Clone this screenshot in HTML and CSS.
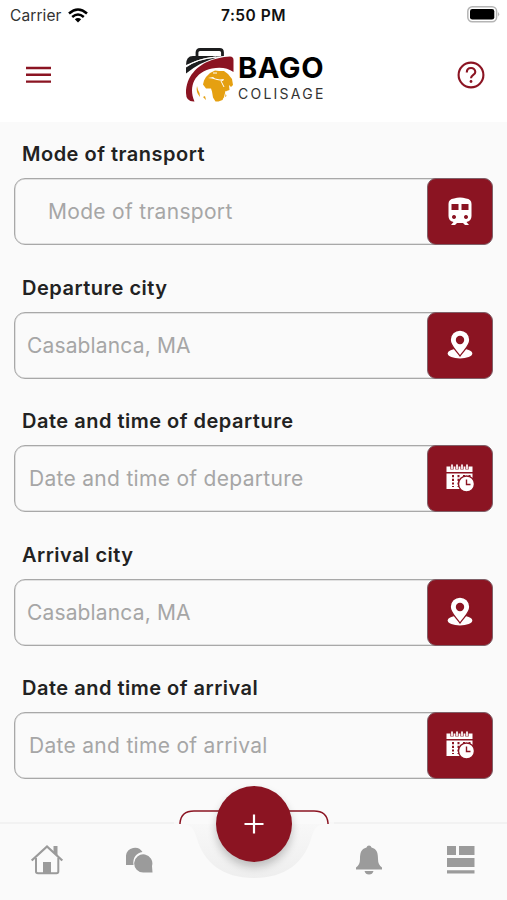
FILE: index.html
```html
<!DOCTYPE html>
<html lang="en">
<head>
<meta charset="utf-8">
<title>Bago Colisage</title>
<link rel="stylesheet" href="styles.css">
</head>
<body>
<svg class="defs" width="0" height="0" aria-hidden="true">
  <symbol id="train" viewBox="0 0 28 32">
    <path fill="#fff" fill-rule="evenodd" d="M8 2.500Q14 .5 20 2.500Q25.500 3 25.500 8v12q0 5-5 6l2.500 3h-4l-2-2h-6l-2 2H5l2.500-3q-5-1-5-6V8q0-5 5.500-5.500zM5.500 8v6h7V8zm10 0v6h7V8zM8 19a2 2 0 1 0 .01 0zm12 0a2 2 0 1 0 .01 0z"/>
  </symbol>
  <symbol id="pin" viewBox="0 0 28 32">
    <ellipse cx="14" cy="24.500" rx="12.300" ry="4.900" fill="#fff"/>
    <path fill="#fff" stroke="#8b1422" stroke-width="1.300" d="M14 1a9.800 9.800 0 0 0-9.800 9.800C4.200 17 10 21 14 27c4-6 9.800-10 9.800-16.200A9.800 9.800 0 0 0 14 1z"/>
    <circle cx="14" cy="11" r="4.200" fill="#8b1422"/>
  </symbol>
  <symbol id="calendar" viewBox="0 0 28 32">
    <path fill="#fff" d="M.5 3.500h26v5.500H.5zM.5 10.500h26v15.500H.5z"/>
    <path stroke="#8b1422" stroke-width="3.200" d="M6 1v5.500M11 1v5.500M16 1v5.500M21 1v5.500"/>
    <path stroke="#fff" stroke-width="1.700" stroke-linecap="round" d="M6 2v3.500M11 2v3.500M16 2v3.500M21 2v3.500"/>
    <path stroke="#8b1422" stroke-width="2" stroke-dasharray="2.200 1.500" d="M7 12v12M12.500 12v12M18 12v4M23.500 12v3"/>
    <circle cx="20.500" cy="21" r="8" fill="#fff" stroke="#8b1422" stroke-width="1.400"/>
    <path d="M20.500 16.500v5h4" fill="none" stroke="#8b1422" stroke-width="1.400"/>
  </symbol>
</svg>
<div class="app">
  <div class="status">
    <div class="carrier"><span>Carrier</span>
      <svg width="20" height="15" viewBox="0 0 20 15" fill="none" stroke="#000" stroke-width="2.500"><path d="M1 5.500Q10-2.500 19 5.500M4.200 9Q10 4 15.800 9"/><path d="M6.800 11.300Q10 8.800 13.200 11.300L10 14.500z" fill="#000" stroke="none"/></svg>
    </div>
    <div class="time">7:50 PM</div>
    <svg class="battery" width="33" height="17" viewBox="0 0 33 17"><rect x=".8" y=".8" width="28.800" height="15" rx="4.500" fill="#fff" stroke="#b5b5b5" stroke-width="1.500"/><rect x="3" y="3" width="24.300" height="10.500" rx="2.300"/><path d="M31.200 6q2 2.300 0 4.500z" fill="#aaa"/></svg>
  </div>
  <header class="header">
    <svg width="25" height="18" viewBox="0 0 25 18" stroke="#8b1422" stroke-width="2.400"><path d="M0 2h25M0 8.800h25M0 15.600h25"/></svg>
    <div class="brand">
      <svg width="50" height="56" viewBox="0 0 50 56">
        <path d="M11 9.500V5.500Q11 2.500 14 2.500H33.500Q36.500 2.500 36.500 5.500V9" fill="none" stroke="#1c1d1e" stroke-width="2.800"/>
        <path d="M0 18Q0 9 7 9H38Q17 9.500 0 18z" fill="#1c1d1e"/>
        <path d="M0 20.500Q12 12 31 10.500Q14 15 0 26.500z" fill="#1c1d1e"/>
        <path d="M0 19.500Q12 11.500 30 10" fill="none" stroke="#fff" stroke-width="1"/>
        <path d="M8.500 54.500Q0 55 0 46C0 29 12 19 21 15Q32 10 44 9.500Q47.500 9.500 47.500 13V25Q39 19 26 21.500C9 25 2 39 8.500 54.500z" fill="#8b1422"/>
        <path d="M20 30l4-4 5-2.500 4 .5 5 0 4 3 4 5 1 6-2 2-2-2 .5 5-3 1-1 2 1 3-3 2-1 2-4 1.500h-3l-2.500-4-1-6-1-3-5 0-3-4 1-4z" fill="#e5a011"/>
        <path d="M22 31l5-1 2 1.500 5 1 4-.5-1 2-6-1-5-1.500z" fill="#fff"/>
        <path d="M35 34l3 6M40 44l-2 8M27 26l4 0" stroke="#fff" stroke-width="1"/>
        <path d="M11 39q-1.500 6 3 11l-.5-4-1.500-3zM17 50l3 3-1-4z" fill="#e5a011"/>
      </svg>
      <div class="wordmark"><div class="bago">BAGO</div><div class="colisage">COLISAGE</div></div>
    </div>
    <svg width="28" height="28" viewBox="0 0 28 28" fill="none" stroke="#8b1422" stroke-width="2.100"><circle cx="14" cy="14" r="12.400"/><path d="M9.800 11.500C9.800 5.500 18.300 5.800 18.300 11C18.300 14 14 13.800 14 17.300"/><circle cx="14" cy="20.500" r="1.400" fill="#8b1422" stroke="none"/></svg>
  </header>
  <main class="form">
    <section class="group"><div class="label">Mode of transport</div><div class="field"><span class="hint mode">Mode of transport</span><div class="tile"><svg width="28" height="32"><use href="#train"/></svg></div></div></section>
    <section class="group"><div class="label">Departure city</div><div class="field"><span class="hint city">Casablanca, MA</span><div class="tile"><svg width="28" height="32"><use href="#pin"/></svg></div></div></section>
    <section class="group"><div class="label">Date and time of departure</div><div class="field"><span class="hint">Date and time of departure</span><div class="tile"><svg width="28" height="32"><use href="#calendar"/></svg></div></div></section>
    <section class="group"><div class="label">Arrival city</div><div class="field"><span class="hint city">Casablanca, MA</span><div class="tile"><svg width="28" height="32"><use href="#pin"/></svg></div></div></section>
    <section class="group"><div class="label">Date and time of arrival</div><div class="field"><span class="hint">Date and time of arrival</span><div class="tile"><svg width="28" height="32"><use href="#calendar"/></svg></div></div></section>
  </main>
  <nav class="nav">
    <svg class="notch" width="160" height="75" viewBox="0 0 160 75"><defs><linearGradient id="shade" x2="0" y2="1"><stop stop-color="#f8f8f8"/><stop offset="1" stop-color="#eeeeee"/></linearGradient></defs><path d="M0 17H160V19H154C142 19 140 24 137 34C130 57 112 73 80 73S30 57 23 34C20 24 18 19 6 19H0z" fill="url(#shade)"/><path d="M6 19V18Q7 6 20 6H140Q153 6 154 18V19" fill="#fafafa" stroke="#8b1422" stroke-width="1.500"/></svg>
    <svg width="34" height="32" viewBox="0 0 34 32" fill="none" stroke="#9b9b9b" stroke-width="2"><path d="M1.700 16.500L17 2.500 32.300 16.500" stroke-width="2.300"/><path d="M6 14V27.500Q6 29.300 8 29.300H26.500Q28.300 29.300 28.300 27.500V14"/><path d="M23.500 2h4v9.500l-4-3.500z" fill="#9b9b9b" stroke="none"/><path d="M13 18h8v11h-8z" fill="#9b9b9b" stroke="none"/></svg>
    <svg class="chat" width="28" height="28" viewBox="0 0 28 28" fill="#9b9b9b"><path d="M1 19V9.500A9 9 0 0 1 17.500 6C11 7 7.500 12 8.500 19z"/><path d="M27.500 26.500H18.500A9.100 9.100 0 1 1 27 20z"/></svg>
    <button class="fab" aria-label="Add"><svg width="20" height="20" viewBox="0 0 20 20"><path d="M10 .5v19M.5 10h19" stroke="#fff" stroke-width="2.200"/></svg></button>
    <svg class="bell" width="28" height="32" viewBox="0 0 28 32" fill="#9b9b9b"><path d="M14 1.500Q16 1.500 16.500 3.500C22 5 23 9 23 15Q23 21 27 23.500V25.500H1V23.500Q5 21 5 15C5 9 6 5 11.500 3.500Q12 1.500 14 1.500zM9.500 27h9Q17.500 30.500 14 30.500T9.500 27z"/></svg>
    <svg width="28" height="28" viewBox="0 0 28 28" fill="#9b9b9b"><path d="M0 0h9v9H0zM12 0h15.500v9H12zM0 12h27.500v9H0zM0 24.200h27.500v3.200H0z"/></svg>
  </nav>
</div>
</body>
</html>
```
FILE: styles.css
```css
* { box-sizing: border-box; }
body { margin: 0; font-family: Inter, "Liberation Sans", sans-serif; background: #fafafa; }
.defs { position: absolute; }
svg { display: block; flex: none; }
.app { width: 507px; height: 900px; display: flex; flex-direction: column; overflow: hidden; }
.status { height: 30px; flex: none; background: #fff; display: grid; grid-template-columns: 1fr auto 1fr; align-items: center; padding: 0 7px 2px 10px; color: #111; font-size: 15.500px; }
.carrier { display: flex; align-items: center; gap: 6px; padding-top: 2px; color: #333; letter-spacing: .1px; }
.time { font-weight: 600; padding-top: 2px; letter-spacing: .5px; margin-left: -3px; }
.battery { justify-self: end; }
.header { height: 92px; flex: none; background: #fff; display: flex; align-items: center; justify-content: space-between; padding: 0 22px 2px 26px; }
.brand { display: flex; align-items: flex-start; gap: 2px; margin-left: 3px; }
.wordmark { width: 87px; padding-top: 4px; white-space: nowrap; }
.bago { font-size: 29px; font-weight: 700; line-height: 34px; letter-spacing: .6px; color: #000; }
.colisage { font-size: 14px; letter-spacing: 2.250px; line-height: 18px; color: #333; }
.form { flex: 1; min-height: 0; padding: 0 14px; }
.group { height: 133.500px; padding-top: 20px; }
.label { height: 36px; line-height: 25px; padding-left: 8px; font-size: 20px; font-weight: 600; letter-spacing: .5px; color: #222; white-space: nowrap; }
.field { height: 67px; border: 1px solid #a8a8a8; box-shadow: inset 0 0 0 .5px #c8c8c8; border-radius: 11px; display: flex; align-items: center; justify-content: space-between; }
.hint { font-size: 21px; letter-spacing: .3px; color: #a6a6a6; white-space: nowrap; padding: 0 0 0 14px; }
.city { padding-left: 12px; letter-spacing: .15px; }
.mode { padding-left: 33px; }
.tile { width: 66px; height: 67px; margin-right: -1px; background: #8b1422; border: 1px solid #806068; border-radius: 9px; display: flex; align-items: center; justify-content: center; flex: none; }
.nav { position: relative; height: 78px; flex: none; background: #fafafa; border-top: 2px solid #f2f2f2; display: flex; justify-content: space-between; align-items: center; padding: 0 32px 4px 30px; }
.notch { position: absolute; left: 174px; top: -19px; }
.chat { margin: 0 2px 0 -2px; }
.bell { margin: 0 1px 0 -1px; }
.fab { position: relative; left: -2px; width: 76px; height: 76px; margin-top: -73px; border: 0; border-radius: 50%; background: #8b1422; display: flex; align-items: center; justify-content: center; box-shadow: 0 5px 9px rgba(0,0,0,.22); padding: 0; }
```
